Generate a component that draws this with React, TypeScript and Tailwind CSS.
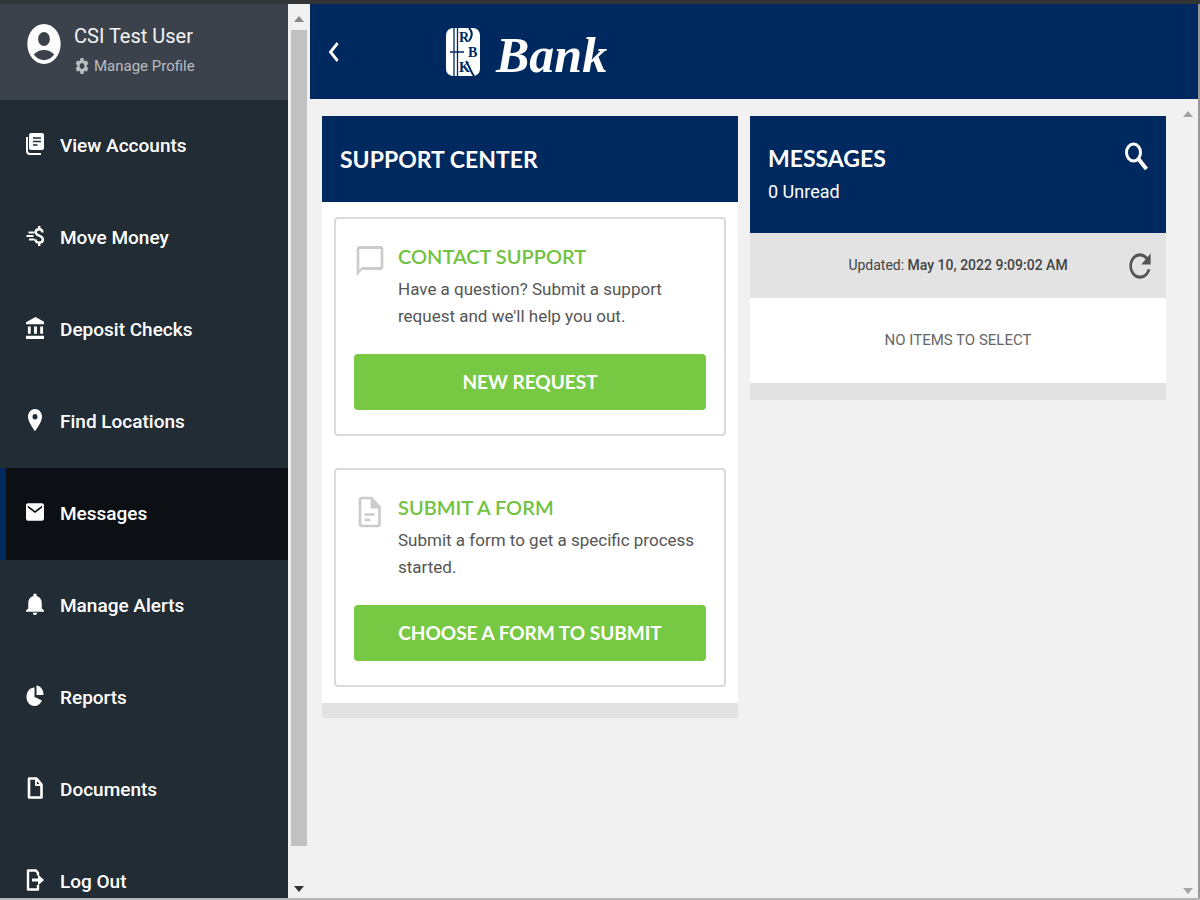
import type { ComponentType } from 'react';
import {
  MdAccountBalance,
  MdAccountCircle,
  MdChevronLeft,
  MdEmail,
  MdLocationOn,
  MdNotifications,
  MdOutlineChatBubbleOutline,
  MdRefresh,
  MdSettings,
} from 'react-icons/md';

type IconProps = { className?: string; preserveAspectRatio?: string; viewBox?: string };
type Icon = ComponentType<IconProps>;

function AccountsIcon({ className }: IconProps) {
  return (
    <svg viewBox="0 0 18 22" className={className} fill="currentColor">
      <path d="M5 0h11a2 2 0 0 1 2 2v13a2 2 0 0 1-2 2H5a2 2 0 0 1-2-2V2a2 2 0 0 1 2-2z" />
      <path d="M1 4v14a3 3 0 0 0 3 3h11" fill="none" stroke="currentColor" strokeWidth="2" />
      <path d="M7 5h8M7 8.500h8M7 12h4.500" stroke="#222c34" strokeWidth="1.300" />
    </svg>
  );
}

function MoneyIcon({ className }: IconProps) {
  return (
    <svg viewBox="0 0 18 22" className={className} fill="none" stroke="currentColor">
      <path d="M2.500 7.500h6M0.500 11h7M3 14.500h5.500" strokeWidth="2" />
      <path
        d="M16.500 7.500C16.300 5.500 15 4.200 13.200 4.200c-2 0-3.500 1.100-3.500 3 0 4.200 7.200 2.700 7.200 7.200 0 2-1.600 3.300-3.700 3.300s-3.700-1.200-3.800-3.500M13.200 1v3.500M13.200 17.500V21"
        strokeWidth="2.400"
      />
    </svg>
  );
}

function ReportsIcon({ className }: IconProps) {
  return (
    <svg viewBox="0 0 18 22" className={className} fill="currentColor">
      <path d="M8.500 2.500V12l7.500 3.500C14.500 19 11.800 21 8.500 21 3.800 21 0.500 17 0.500 11.800S3.800 2.500 8.500 2.500z" />
      <path d="M10.500 0.500c4.200.5 7 4 7 9.500h-7z" />
    </svg>
  );
}

function DocumentIcon({ className }: IconProps) {
  return (
    <svg viewBox="0 0 18 22" className={className} fill="none" stroke="currentColor" strokeWidth="2.600" strokeLinejoin="round">
      <path d="M3 1.500h7.500L15.500 7.500v13H3z" />
      <path d="M10 2v6h5.500" strokeWidth="2" />
    </svg>
  );
}

function LogOutIcon({ className }: IconProps) {
  return (
    <svg viewBox="0 0 18 22" className={className} fill="none" stroke="currentColor" strokeWidth="2.400">
      <path d="M12 6.500V4L10 1.500H2v19h10V16" strokeLinejoin="round" />
      <path d="M6 11h7" strokeWidth="3" />
      <path d="M12 5.500l6 5.500-6 5.500z" fill="currentColor" stroke="none" />
    </svg>
  );
}

function FormIcon({ className }: IconProps) {
  return (
    <svg viewBox="0 0 32 36" className={className} fill="none" stroke="currentColor" strokeWidth="2.600" strokeLinejoin="round">
      <path d="M8 4h9.500l8 9v17a2 2 0 0 1-2 2H8a2 2 0 0 1-2-2V6a2 2 0 0 1 2-2z" />
      <path d="M17 4l8.500 10H17z" fill="currentColor" strokeWidth="1" />
      <path d="M10.500 20.500h10M10.500 26h6" />
    </svg>
  );
}

function SearchIcon({ className }: IconProps) {
  return (
    <svg viewBox="0 0 24 30" className={className} fill="none" stroke="currentColor">
      <ellipse cx="9.500" cy="10.500" rx="7" ry="8.500" strokeWidth="3" />
      <path d="M14.500 17l8 10" strokeWidth="4" />
    </svg>
  );
}

// viewBox crops the padding the Material icons carry around the glyph
const navItems: { label: string; icon: Icon; viewBox?: string }[] = [
  { label: 'View Accounts', icon: AccountsIcon },
  { label: 'Move Money', icon: MoneyIcon },
  { label: 'Deposit Checks', icon: MdAccountBalance, viewBox: '2 1 19 21' },
  { label: 'Find Locations', icon: MdLocationOn, viewBox: '3 2 18 20' },
  { label: 'Messages', icon: MdEmail, viewBox: '2 2 20 20' },
  { label: 'Manage Alerts', icon: MdNotifications, viewBox: '4 2 16 20' },
  { label: 'Reports', icon: ReportsIcon },
  { label: 'Documents', icon: DocumentIcon },
  { label: 'Log Out', icon: LogOutIcon },
];

const supportOptions: { title: string; text: string; action: string; icon: Icon }[] = [
  {
    title: 'CONTACT SUPPORT',
    text: "Have a question? Submit a support request and we'll help you out.",
    action: 'NEW REQUEST',
    icon: MdOutlineChatBubbleOutline,
  },
  {
    title: 'SUBMIT A FORM',
    text: 'Submit a form to get a specific process started.',
    action: 'CHOOSE A FORM TO SUBMIT',
    icon: FormIcon,
  },
];

function Arrow({ down, className }: { down?: boolean; className: string }) {
  return (
    <svg viewBox="0 0 10 6" className={`w-2.5 h-1.5 ${className}`} fill="currentColor">
      <path d={down ? 'M0 0h10L5 6z' : 'M0 6h10L5 0z'} />
    </svg>
  );
}

function Sidebar() {
  return (
    <aside className="w-72 shrink-0 bg-[#222c34] text-white overflow-hidden">
      <div className="flex h-24 bg-[#3c424b] pl-6 pt-4">
        <MdAccountCircle preserveAspectRatio="none" className="w-10 h-12 shrink-0" />
        <div className="pl-2.5">
          <p className="text-[20px] leading-8 text-gray-100">CSI Test User</p>
          <a href="#profile" className="flex items-center gap-1 text-[15px] leading-7 text-[#b9bdc1]">
            <MdSettings preserveAspectRatio="none" className="w-4 h-5" />
            Manage Profile
          </a>
        </div>
      </div>
      <nav>
        {navItems.map(({ label, icon: NavIcon, viewBox }) => (
          <a
            key={label}
            href="#"
            className={`flex h-[92px] items-center border-l-6 pl-5 text-[19px] font-medium ${
              label === 'Messages' ? 'border-[#002a5e] bg-[#0c1014]' : 'border-transparent'
            }`}
          >
            <span className="mr-4 mb-1">
              <NavIcon
                preserveAspectRatio="none"
                {...(viewBox && { viewBox })}
                className="w-[18px] h-[22px]"
              />
            </span>
            {label}
          </a>
        ))}
      </nav>
    </aside>
  );
}

function Logo() {
  return (
    <div className="flex items-center gap-4">
      <svg
        viewBox="0 0 34 48"
        className="w-[34px] h-12 text-[#00295f]"
        fontFamily="Liberation Serif, serif"
        fontSize="14"
        fontWeight="bold"
        fill="currentColor"
      >
        <rect width="34" height="48" rx="7" fill="#fff" />
        <path d="M8 0v48M11.500 0v48M4 24h14" stroke="currentColor" strokeWidth="1.300" />
        <path d="M23 0c4 4 3 9 0 13M20 33c3 4 4 10 8 15" stroke="currentColor" strokeWidth="2" fill="none" />
        <text x="13" y="14">R</text>
        <text x="22" y="29">B</text>
        <text x="13" y="44">K</text>
      </svg>
      <span className="pt-1.5 font-['Liberation_Serif',serif] text-[50px] leading-none font-bold italic">Bank</span>
    </div>
  );
}

function SupportCenter() {
  return (
    <section>
      <h2 className="flex h-[86px] items-center bg-[#00295f] px-[18px] font-[Lato,sans-serif] text-[23px] font-bold text-white">
        SUPPORT CENTER
      </h2>
      <div className="flex flex-col gap-8 border-b-[15px] border-[#e2e2e2] bg-white px-3 pt-[15px] pb-4">
        {supportOptions.map(({ title, text, action, icon: OptionIcon }) => (
          <div key={title} className="rounded-sm border-2 border-[#dadada] px-[18px] py-6">
            <div className="flex gap-3">
              <OptionIcon preserveAspectRatio="none" className="w-8 h-9 shrink-0 text-[#cbcbcb]" />
              <div>
                <h3 className="font-[Lato,sans-serif] text-[20px] leading-[27px] font-semibold text-[#71c240]">{title}</h3>
                <p className="mt-1.5 text-[17px] leading-[27px] text-[#555]">{text}</p>
              </div>
            </div>
            <button className="mt-6 h-14 w-full rounded-sm bg-[#77c943] font-[Lato,sans-serif] text-[19px] font-bold text-white">
              {action}
            </button>
          </div>
        ))}
      </div>
    </section>
  );
}

function Messages() {
  return (
    <section>
      <header className="flex h-[117px] items-start justify-between bg-[#00295f] px-[18px] pt-6 text-white">
        <div>
          <h2 className="font-[Lato,sans-serif] text-[23px] leading-9 font-bold">MESSAGES</h2>
          <p className="text-[18px] leading-8">0 Unread</p>
        </div>
        <button aria-label="Search" className="pt-0.5">
          <SearchIcon className="w-6 h-[30px]" />
        </button>
      </header>
      <div className="relative flex h-[65px] items-center justify-center bg-[#e3e3e3] text-[14px] text-[#444]">
        <p>
          Updated: <span className="font-medium">May 10, 2022 9:09:02 AM</span>
        </p>
        <button aria-label="Refresh" className="absolute right-2.5 text-[#555]">
          <MdRefresh preserveAspectRatio="none" className="w-8 h-[38px]" />
        </button>
      </div>
      <p className="flex h-[102px] items-center justify-center border-b-[17px] border-[#e2e2e2] bg-white text-[15px] text-[#666]">
        NO ITEMS TO SELECT
      </p>
    </section>
  );
}

export default function App() {
  return (
    <div className="flex h-screen flex-col border-t-4 border-b-2 border-t-[#333436] border-b-[#b5b5b5] bg-[#f1f1f1] font-[Roboto,sans-serif]">
      <div className="flex min-h-0 flex-1">
        <Sidebar />
        <div className="flex w-[22px] shrink-0 flex-col items-center bg-[#f1f1f1] py-1.5">
          <Arrow className="mt-1.5 mb-2 text-[#8a8a8a]" />
          <div className="w-4 flex-1 bg-[#c1c1c1]" />
          <Arrow down className="mt-10 text-[#333]" />
        </div>
        <div className="flex min-w-0 flex-1 flex-col border-r-2 border-[#999]">
          <header className="flex h-[95px] shrink-0 items-center bg-[#00295f] pl-2 text-white">
            <button aria-label="Back" className="mr-24">
              <MdChevronLeft preserveAspectRatio="none" className="h-10 w-8" />
            </button>
            <Logo />
          </header>
          <div className="flex min-h-0 flex-1">
            <main className="grid min-w-0 flex-1 grid-cols-2 items-start gap-3 px-3 pt-[17px]">
              <SupportCenter />
              <Messages />
            </main>
            <div className="flex w-5 flex-col items-center justify-between pt-3 pb-1">
              <Arrow className="text-[#a3a3a3]" />
              <Arrow down className="text-[#a3a3a3]" />
            </div>
          </div>
        </div>
      </div>
    </div>
  );
}
